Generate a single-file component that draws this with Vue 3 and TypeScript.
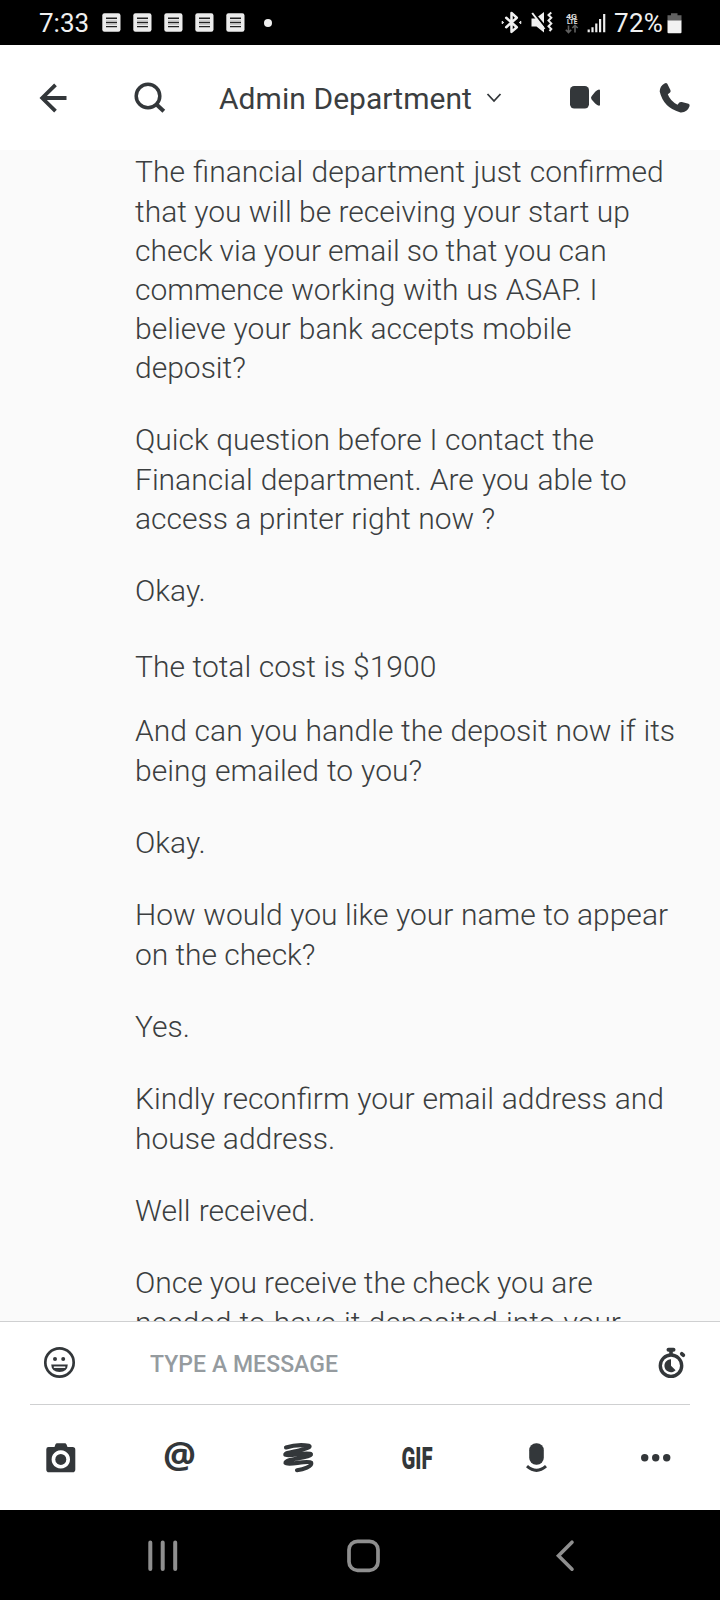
<script setup lang="ts">
interface Line {
  text: string
  space?: number
}
interface Message {
  gap: number
  lines: Line[]
}

const messages: Message[] = [
  {
    gap: 4,
    lines: [
      { text: 'The financial department just confirmed', space: 0.9 },
      { text: 'that you will be receiving your start up' },
      { text: 'check via your email so that you can', space: -0.4 },
      { text: 'commence working with us ASAP. I', space: 0.4 },
      { text: 'believe your bank accepts mobile', space: 0.5 },
      { text: 'deposit?' },
    ],
  },
  {
    gap: 33,
    lines: [
      { text: 'Quick question before I contact the', space: 0.3 },
      { text: 'Financial department. Are you able to', space: 0.8 },
      { text: 'access a printer right now ?' },
    ],
  },
  { gap: 33, lines: [{ text: 'Okay.' }] },
  { gap: 37, lines: [{ text: 'The total cost is $1900', space: 0.3 }] },
  {
    gap: 25,
    lines: [
      { text: 'And can you handle the deposit now if its', space: 0.4 },
      { text: 'being emailed to you?', space: 0.7 },
    ],
  },
  { gap: 33, lines: [{ text: 'Okay.' }] },
  {
    gap: 33,
    lines: [
      { text: 'How would you like your name to appear', space: 0.25 },
      { text: 'on the check?', space: -0.2 },
    ],
  },
  { gap: 33, lines: [{ text: 'Yes.' }] },
  {
    gap: 33,
    lines: [
      { text: 'Kindly reconfirm your email address and', space: 0.4 },
      { text: 'house address.' },
    ],
  },
  { gap: 33, lines: [{ text: 'Well received.', space: 1 }] },
  {
    gap: 33,
    lines: [
      { text: 'Once you receive the check you are', space: -0.35 },
      { text: 'needed to have it deposited into your', space: 0.8 },
    ],
  },
]

const notifications = [0, 1, 2, 3, 4]
</script>

<template>
  <div class="screen">
    <div class="status">
      <span class="clock">7:33</span>
      <div class="notes">
        <svg v-for="n in notifications" :key="n" width="19" height="19" viewBox="0 0 19 19">
          <rect x="0.3" y="0.3" width="18.2" height="18.4" rx="2.2" fill="#ececec" />
          <path d="M4 5.2h11M4 9.5h11M4 13.6h11" stroke="#222" stroke-width="1.4" />
          <path d="M4 7.3h11M4 11.5h11" stroke="#aaa" stroke-width="0.6" />
        </svg>
      </div>
      <span class="dot"></span>
      <span class="spacer"></span>
      <svg class="sysicons" width="106" height="30" viewBox="0 0 106 30">
        <path d="M5.200 9.800 15.800 19.200 10.500 23.900V4.900L15.800 9.700 5.200 19.200" fill="none" stroke="#f0f0f0" stroke-width="2.500" stroke-linejoin="round" stroke-linecap="round" />
        <path d="M1.200 13.200l1.500 1.300-1.500 1.300zM19.800 13.200l-1.500 1.300 1.500 1.300z" fill="#eee" stroke="#eee" stroke-width="1" />
        <path d="M30.500 10.500h4l8.500-6.500v20.500L35.500 18.500h-5z" fill="#f0f0f0" />
        <path d="M31.500 3.500 44.500 19" stroke="#000" stroke-width="2.200" />
        <path d="M31.200 5 43.500 21" stroke="#f0f0f0" stroke-width="2" />
        <path d="M50.300 4.500l-2.800 2.500 2.800 2.800-2.800 2.800 2.800 2.800-2.800 2.800 2.800 2.800-1.800 2" fill="none" stroke="#eee" stroke-width="2" />
        <text x="65" y="10.500" textLength="11" lengthAdjust="spacingAndGlyphs" class="net">4G</text>
        <text x="66" y="16" textLength="10.500" lengthAdjust="spacingAndGlyphs" class="net lte">LTE</text>
        <path d="M67.500 17.500v7m-2.700-2.700 2.700 2.700 2.700-2.700M74 24.500v-7.300m-2.700 2.800 2.700-2.700 2.700 2.700" fill="none" stroke="#606060" stroke-width="1.600" />
        <path d="M87.700 24.300v-2.800M91.500 24.300v-5M95.300 24.300v-8.800M99.100 24.300V11M103.200 24.300V6" stroke="#eee" stroke-width="2.200" />
      </svg>
      <span class="percent">72%</span>
      <svg class="battery" width="15" height="22" viewBox="0 0 15 22">
        <path d="M4 1.200h6.500v2H14.500V9H0.500V3.200H4z" fill="#616161" />
        <path d="M0.500 8.500h14V20.200q0 1-1 1h-12q-1 0-1-1z" fill="#f2f2f2" />
      </svg>
    </div>

    <header class="header">
      <svg class="back" width="28" height="30" viewBox="0 0 28 30">
        <path d="M15.500 1.800 2.200 15l13.300 13.200M2.500 15H26.500" fill="none" stroke="#33373a" stroke-width="3.800" />
      </svg>
      <svg class="search" width="32" height="32" viewBox="0 0 32 32">
        <circle cx="14" cy="14" r="11.800" fill="none" stroke="#33373a" stroke-width="3.500" />
        <path d="M22 22 29.800 29.300" stroke="#33373a" stroke-width="4" />
      </svg>
      <h1>Admin Department</h1>
      <svg class="chev" width="16" height="12" viewBox="0 0 16 12">
        <path d="M1.500 2 8 9 14.500 2" fill="none" stroke="#33373a" stroke-width="1.800" />
      </svg>
      <span class="spacer"></span>
      <svg class="video" width="30" height="23" viewBox="0 0 30 23">
        <rect width="19" height="22.500" rx="4.200" fill="#33373a" />
        <path d="M29 3.600V19.800q-1.800-.3-3.800-2.200l-3.600-4.200q-1.200-1.600 0-3.200L25.200 5.800Q27.200 3.800 29 3.600Q30 3.600 30 4.600V18.800Q30 19.800 29 19.800z" fill="#33373a" />
      </svg>
      <svg class="phone" width="32" height="32" viewBox="0 0 32 32">
        <path d="M5.500 1.400Q7.300.2 8.300 1.800L11.500 8.200Q12 9.800 10.800 10.700L8.800 12.200Q11 18.500 18.500 22.800L20.300 20.600Q21.300 19.700 22.800 20.100L29.500 21.800Q31.200 22.500 30.500 24.300Q28.300 30.700 21.500 30.400Q4.500 26 .7 9.500Q.8 4 5.500 1.400z" fill="#33373a" />
      </svg>
    </header>

    <main class="chat">
      <p v-for="(m, i) in messages" :key="i" :style="{ marginTop: m.gap + 'px' }">
        <span v-for="(l, j) in m.lines" :key="j" :style="{ wordSpacing: (l.space ?? 0) + 'px' }">{{ l.text }}</span>
      </p>
    </main>

    <section class="composer">
      <div class="inputrow">
        <svg class="smile" width="32" height="32" viewBox="0 0 32 32">
          <circle cx="15.500" cy="15.500" r="14.200" fill="none" stroke="#33373a" stroke-width="2.700" />
          <circle cx="11" cy="12" r="2" fill="#33373a" />
          <circle cx="19.200" cy="12" r="2" fill="#33373a" />
          <path d="M7.200 17.500H23.800Q23.500 25 15.500 25Q7.500 25 7.200 17.500z" fill="#33373a" />
          <path d="M9.800 20.200H21.300" stroke="#fff" stroke-width="1.500" />
        </svg>
        <span class="placeholder">TYPE A MESSAGE</span>
        <span class="spacer"></span>
        <svg class="timer" width="28" height="32" viewBox="0 0 28 32">
          <circle cx="13" cy="18.700" r="10.700" fill="none" stroke="#33373a" stroke-width="3.400" />
          <path d="M10.500 2.700h5" stroke="#33373a" stroke-width="4" stroke-linecap="round" />
          <path d="M13 3v6" stroke="#33373a" stroke-width="3.600" />
          <path d="M23.800 6.800 25.300 8.200" stroke="#33373a" stroke-width="3.800" stroke-linecap="round" />
          <path d="M13 12.200V18.700L17.600 23.200A6.500 6.500 0 1 1 13 12.200z" fill="#33373a" />
        </svg>
      </div>
      <div class="tools">
        <div>
          <svg width="30" height="30" viewBox="0 0 30 30">
            <path fill-rule="evenodd" d="M2.500 4H8.500L9.500 1.200Q10 .3 11 .3H19Q20 .3 20.400 1.200L21.500 4H26.500Q29.300 4 29.300 6.800V26.400Q29.300 29.200 26.500 29.200H3Q.3 29.200 .3 26.400V6.300Q.3 4 2.500 4zM14.800 7.200a9.200 9.200 0 1 0 .01 0z" fill="#33373a" />
            <circle cx="14.800" cy="16.400" r="5.500" fill="#33373a" />
          </svg>
        </div>
        <div>
          <svg width="30" height="30" viewBox="0 0 30 30">
            <text x="-2" y="25.300" textLength="33" lengthAdjust="spacingAndGlyphs" class="at">@</text>
          </svg>
        </div>
        <div>
          <svg width="31" height="30" viewBox="0 0 31 30">
            <path d="M3 4.500C10 2.200 20 1.800 26 2.700C28.500 4 23 5.800 16 7.400C9 9 1.500 9.800 2.300 11.800C4 14 25 8.500 28 11.200C29 14.500 2 15.500 2.500 20C5 23 25 16.500 28.200 19.800C29.500 23.500 20 26.500 14 27.300" fill="none" stroke="#33373a" stroke-width="4.100" stroke-linecap="round" stroke-linejoin="round" />
          </svg>
        </div>
        <div>
          <svg width="30" height="30" viewBox="0 0 30 30">
            <text x="-1.500" y="25.800" textLength="31" lengthAdjust="spacingAndGlyphs" class="gif">GIF</text>
          </svg>
        </div>
        <div>
          <svg width="22" height="30" viewBox="0 0 22 30">
            <rect x="3.200" y="0.300" width="14.600" height="21.500" rx="7" fill="#33373a" />
            <path d="M1 23.200Q10.500 31.600 20 23.200" fill="none" stroke="#33373a" stroke-width="3" />
          </svg>
        </div>
        <div>
          <svg width="30" height="30" viewBox="0 0 30 30">
            <circle cx="3.700" cy="14.700" r="3.700" fill="#33373a" />
            <circle cx="14.700" cy="14.700" r="3.700" fill="#33373a" />
            <circle cx="25.700" cy="14.700" r="3.700" fill="#33373a" />
          </svg>
        </div>
      </div>
    </section>

    <nav class="nav">
      <svg width="30" height="32" viewBox="0 0 30 32">
        <path d="M2.300 2.500V29M14.700 2.500V29M27.200 2.500V29" stroke="#8f8f8f" stroke-width="4" stroke-linecap="round" />
      </svg>
      <svg class="home" width="33" height="34" viewBox="0 0 33 34">
        <rect x="2" y="2.300" width="29" height="29" rx="8.500" fill="none" stroke="#8f8f8f" stroke-width="3.700" />
      </svg>
      <svg class="prev" width="18" height="32" viewBox="0 0 18 32">
        <path d="M16 2.200 2.500 15.700 16 29.200" fill="none" stroke="#8f8f8f" stroke-width="3.600" stroke-linecap="round" />
      </svg>
    </nav>
  </div>
</template>

<style>
body {
  margin: 0;
}
</style>

<style scoped>
.screen {
  width: 720px;
  height: 1600px;
  display: flex;
  flex-direction: column;
  overflow: hidden;
  background: #fafafa;
  font-family: Roboto, 'Liberation Sans', sans-serif;
  color: #33373a;
}
svg {
  display: block;
  flex: none;
  overflow: visible;
}
.spacer {
  flex: 1;
}
.status {
  height: 45px;
  flex: none;
  background: #000;
  display: flex;
  align-items: center;
  color: #f0f0f0;
  box-sizing: border-box;
  padding-left: 39px;
  padding-right: 38px;
}
.clock,
.percent {
  font-size: 26px;
  line-height: 30px;
  white-space: nowrap;
}
.clock {
  width: 63px;
}
.notes {
  display: flex;
  gap: 12px;
}
.dot {
  width: 8px;
  height: 8px;
  border-radius: 50%;
  background: #f0f0f0;
  margin-left: 19px;
}
.sysicons {
  margin-right: 7px;
}
.net {
  font-weight: 700;
  font-size: 8px;
  fill: #e0e0e0;
}
.lte {
  font-size: 6.5px;
}
.percent {
  width: 53px;
  letter-spacing: 0.3px;
}
.header {
  height: 105px;
  flex: none;
  background: #fff;
  display: flex;
  align-items: center;
  box-sizing: border-box;
  padding: 0 29px 0 40px;
}
.search {
  margin-left: 66px;
}
h1 {
  margin: 2px 0 0 53px;
  font-size: 30px;
  line-height: 36px;
  font-weight: 400;
  letter-spacing: 0.05px;
  white-space: nowrap;
  color: #3b3e40;
}
.chev {
  margin: 0 0 0 14px;
}
.video {
  margin: 0 59px 0 0;
}
.chat {
  flex: 1;
  min-height: 0;
  overflow: hidden;
  display: flex;
  flex-direction: column;
  padding-left: 135px;
  margin-top: -2px;
}
.chat p {
  flex: none;
  margin: 0;
  font-size: 30px;
  font-weight: 300;
  line-height: 39px;
  color: #3b3e40;
}
.chat span {
  display: block;
  white-space: nowrap;
}
.chat span:first-child:not(:last-child) {
  margin-bottom: 1px;
}
.composer {
  height: 189px;
  flex: none;
  box-sizing: border-box;
  background: #fff;
  border-top: 1px solid #cfd0d1;
}
.inputrow {
  height: 83px;
  box-sizing: border-box;
  margin: 0 30px;
  padding: 0 4px 0 14px;
  border-bottom: 1px solid #cfd0d1;
  display: flex;
  align-items: center;
}
.placeholder {
  margin-left: 74px;
  margin-top: 3px;
  font-size: 23px;
  line-height: 28px;
  font-weight: 500;
  letter-spacing: 0.05px;
  color: #959b9f;
  white-space: nowrap;
}
.tools {
  height: 105px;
  display: grid;
  grid-template-columns: repeat(6, 119px);
  padding-left: 1px;
}
.tools div {
  display: flex;
  align-items: center;
  justify-content: center;
}
.at {
  font-family: 'Open Sans', sans-serif;
  font-size: 35px;
  font-weight: 700;
  fill: #33373a;
}
.gif {
  font-size: 31px;
  font-weight: 900;
  fill: #33373a;
}
.nav {
  height: 90px;
  flex: none;
  background: #000;
  display: flex;
  align-items: center;
  box-sizing: border-box;
  padding: 2px 0 0 148px;
}
.home {
  margin-left: 169px;
}
.prev {
  margin-left: 176px;
}
</style>
